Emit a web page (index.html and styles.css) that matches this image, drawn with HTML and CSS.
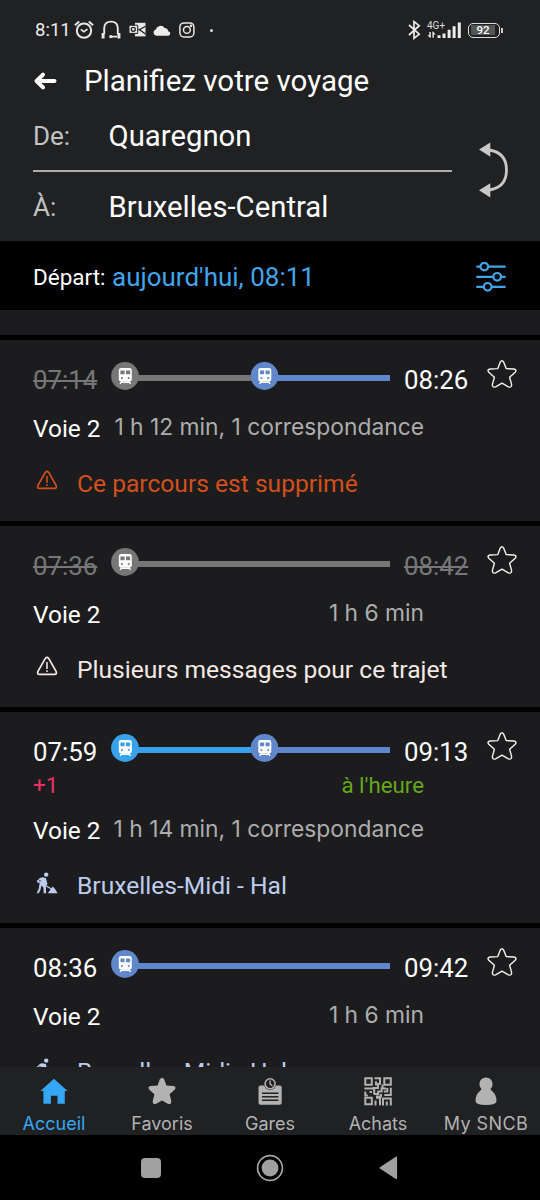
FILE: index.html
```html
<!DOCTYPE html>
<html lang="fr">
<head>
<meta charset="utf-8">
<title>Planifiez votre voyage</title>
<link rel="stylesheet" href="styles.css">
</head>
<body>
<svg class="defs" width="0" height="0">
  <symbol id="pin" viewBox="0 0 28 28">
    <circle cx="14" cy="14" r="13.9" fill="currentColor"/>
    <rect x="7.8" y="6" width="13" height="13.6" rx="2.4" fill="#fff"/>
    <path d="M9.4 8.6h4.2v3.6H9.4zM15 8.6h4.2v3.6H15z" fill="currentColor"/>
    <circle cx="10.9" cy="16" r="1.1" fill="currentColor"/><circle cx="17.7" cy="16" r="1.1" fill="currentColor"/>
    <path d="M10.6 19l-1.4 3M18 19l1.4 3M10.5 20.2h7.6" stroke="#fff" stroke-width="1.4" fill="none"/>
  </symbol>
  <symbol id="star" viewBox="0 0 30 30">
    <path d="M13.2 2.2Q15 -.8 16.7 2.2L19.2 8.6L26.6 9Q30.4 9.6 28.2 12.3L22.6 17.3L24.6 24.4Q24.8 28 21.4 26.8L15 23.1L8.6 26.8Q5.2 28 5.4 24.4L7.4 17.3L1.8 12.3Q-.4 9.6 3.4 9L10.8 8.6Z" fill="none" stroke="#f2f2f2" stroke-width="1.4" stroke-linejoin="round"/>
  </symbol>
  <symbol id="warn" viewBox="0 0 22 20">
    <path d="M9.3 2.4Q11 .2 12.7 2.4L20.2 15.7Q21 18.3 18.5 18.4H3.5Q1 18.3 1.8 15.7Z" fill="none" stroke="currentColor" stroke-width="1.7" stroke-linejoin="round"/>
    <path d="M11 6v7M11 14.3v1.8" stroke="currentColor" stroke-width="1.5"/>
  </symbol>
  <symbol id="works" viewBox="0 0 22 22">
    <circle cx="10.2" cy="2.6" r="2.2" fill="currentColor"/>
    <path d="M1.2 10.6Q2.2 5.6 6.5 5.2L9.8 6.1L11.6 12.2L9.9 13.2L10.1 21.3H7.7L7.4 15.5L5.4 13.6L4.6 17.4L2.8 21.3H.7L2.8 16.4L3.6 11.2L4.8 8.2L3 8.6L2.6 10.9Z" fill="currentColor"/>
    <path d="M1 8.6L15.5 17" stroke="currentColor" stroke-width="1.3"/>
    <path d="M11.8 21.3L14.7 17.3L16.7 14.6L19 17L21.6 21.3Z" fill="currentColor"/>
  </symbol>
</svg>

<header class="top">
  <div class="status">
    <span class="clock">8:11</span>
    <svg class="s-alarm" width="20" height="20" viewBox="0 0 20 20" fill="none" stroke="#e8e8e8"><circle cx="10" cy="10.6" r="7.2" stroke-width="2"/><path d="M6.8 9.4l3 2.3 3.7-2.6" stroke-width="1.7"/><path d="M.9 5.3L5.2 1.4M19.1 5.3L14.8 1.4" stroke-width="2"/></svg>
    <svg class="s-head" width="20" height="20" viewBox="0 0 20 20" fill="none" stroke="#e8e8e8" stroke-width="1.9"><path d="M3.2 14V8.5Q3.2 1.6 10 1.6T16.8 8.5V14M10 16.6h6"/><path d="M.6 13h3v5.6h-3zM16.4 13h3v5.6h-3z" fill="#e8e8e8" stroke="none"/><circle cx="9.8" cy="16.6" r="1.7" fill="#e8e8e8" stroke="none"/></svg>
    <svg class="s-mail" width="17" height="16" viewBox="0 0 17 16"><path d="M6 .8h10.5v13.6H6z" fill="#e8e8e8"/><path d="M9.5 7l7 5M9.5 8.3l7-4" stroke="#202123" stroke-width="1.3"/><path d="M0 3.2h8.7v8.2H0z" fill="#e8e8e8" stroke="#202123"/><circle cx="4.3" cy="7.3" r="2" fill="none" stroke="#202123" stroke-width="1.3"/></svg>
    <svg class="s-cloud" width="18" height="11" viewBox="0 0 18 11"><path d="M3.3 10.7A3.2 3.2 0 0 1 2.7 4.5A5 5 0 0 1 11.6 3A4 4 0 0 1 15.3 6.2A2.3 2.3 0 0 1 15.5 10.7Z" fill="#ececec"/></svg>
    <svg class="s-insta" width="16" height="16" viewBox="0 0 16 16" fill="none" stroke="#e8e8e8" stroke-width="1.5"><rect x=".9" y=".9" width="14" height="14" rx="4"/><circle cx="7.9" cy="7.9" r="3.4"/><circle cx="12" cy="3.8" r=".6"/></svg>
    <span class="dot"></span>
    <svg class="s-bt" width="13" height="20" viewBox="0 0 13 20" fill="none" stroke="#ececec" stroke-width="1.7"><path d="M1 5l10.2 9.2L6 18.3V1.6l5.2 4.1L1 15"/></svg>
    <div class="signal"><span>4G+</span>
      <svg width="35" height="18" viewBox="0 0 35 18" fill="#ececec"><path d="M10.5 14.3h3V17h-3zM15.5 12.5h3V17h-3zM20.6 8.8h3V17h-3zM25.6 5.2h3V17h-3zM30.8 1.5h3V17h-3z"/><path d="M2.3 11v3.2H.4L3 16.8h.8V11zM5.4 10.4v6.4h1.4v-3.2h1.8L6.1 10.4z"/></svg>
    </div>
    <div class="battery"><span>92</span></div>
  </div>
  <div class="titlebar">
    <svg width="23" height="18" viewBox="0 0 23 18" fill="none" stroke="#fff" stroke-width="4" stroke-linecap="round" stroke-linejoin="round"><path d="M3 9h17.5M9 2.6L2.6 9L9 15.4"/></svg>
    <h1>Planifiez votre voyage</h1>
  </div>
  <div class="route">
    <div class="fields">
      <div class="field from"><label>De:</label><span>Quaregnon</span></div>
      <div class="field to"><label>À:</label><span>Bruxelles-Central</span></div>
    </div>
    <svg class="swap" width="30" height="56" viewBox="0 0 30 56"><path d="M10 8Q27.5 10.5 27.5 28T10 48" fill="none" stroke="#c8c8c9" stroke-width="2.8"/><path d="M0 7.6L11.3.5v14.3zM0 48.3L11.3 41.2v14.3z" fill="#c8c8c9"/></svg>
  </div>
</header>

<section class="when">
  <span class="when-label">Départ:</span><span class="when-value">aujourd'hui, 08:11</span>
  <svg width="30" height="30" viewBox="0 0 30 30" fill="none" stroke="#40a5e9" stroke-width="2.2"><path d="M.3 4.6h4.2M12.2 4.6h17.4M.3 14.8h17M25.1 14.8h4.5M.3 24.8h7.5M15.6 24.8h14"/><circle cx="8.3" cy="4.6" r="3.8"/><circle cx="21.2" cy="14.8" r="3.8"/><circle cx="11.7" cy="24.8" r="3.8"/></svg>
</section>

<main class="results">
  <div class="strip"></div>
  <article class="card">
    <div class="times">
      <time class="cut">07:14</time>
      <svg class="track" width="279" height="28" viewBox="0 0 279 28"><path d="M14 16h140" stroke="#777" stroke-width="5.8"/><path d="M153 16h126" stroke="#6087cb" stroke-width="5.8"/><use href="#pin" class="grey" width="28" height="28"/><use href="#pin" class="blue" x="139.5" width="28" height="28"/></svg>
      <time>08:26</time>
      <svg class="fav" width="30" height="30"><use href="#star"/></svg>
    </div>
    <div class="info"><span>Voie 2</span><span class="dur">1 h 12 min, 1 correspondance</span></div>
    <div class="alert cancelled"><svg width="22" height="20"><use href="#warn"/></svg><span>Ce parcours est supprimé</span></div>
  </article>

  <article class="card">
    <div class="times">
      <time class="cut">07:36</time>
      <svg class="track" width="279" height="28" viewBox="0 0 279 28"><path d="M14 16h265" stroke="#777" stroke-width="5.8"/><use href="#pin" class="grey" width="28" height="28"/></svg>
      <time class="cut">08:42</time>
      <svg class="fav" width="30" height="30"><use href="#star"/></svg>
    </div>
    <div class="info"><span>Voie 2</span><span class="dur">1 h 6 min</span></div>
    <div class="alert notice"><svg width="22" height="20"><use href="#warn"/></svg><span>Plusieurs messages pour ce trajet</span></div>
  </article>

  <article class="card">
    <div class="times">
      <time>07:59</time>
      <svg class="track" width="279" height="28" viewBox="0 0 279 28"><path d="M14 16h140" stroke="#38a3ec" stroke-width="5.8"/><path d="M153 16h126" stroke="#6087cb" stroke-width="5.8"/><use href="#pin" class="sky" width="28" height="28"/><use href="#pin" class="blue" x="139.5" width="28" height="28"/></svg>
      <time>09:13</time>
      <svg class="fav" width="30" height="30"><use href="#star"/></svg>
    </div>
    <div class="delay"><span class="late">+1</span><span class="ontime">à l'heure</span></div>
    <div class="info"><span>Voie 2</span><span class="dur">1 h 14 min, 1 correspondance</span></div>
    <div class="alert works"><svg width="22" height="22"><use href="#works"/></svg><span>Bruxelles-Midi - Hal</span></div>
  </article>

  <article class="card">
    <div class="times">
      <time>08:36</time>
      <svg class="track" width="279" height="28" viewBox="0 0 279 28"><path d="M14 16h265" stroke="#6087cb" stroke-width="5.8"/><use href="#pin" class="blue" width="28" height="28"/></svg>
      <time>09:42</time>
      <svg class="fav" width="30" height="30"><use href="#star"/></svg>
    </div>
    <div class="info"><span>Voie 2</span><span class="dur">1 h 6 min</span></div>
    <div class="alert works"><svg width="22" height="22"><use href="#works"/></svg><span>Bruxelles-Midi - Hal</span></div>
  </article>
</main>

<nav class="tabs">
  <a class="tab active"><svg width="30" height="30" viewBox="0 0 30 30" fill="currentColor"><path d="M15 1.8L28.6 14h-2.8v12.7h-7.3v-8h-6.6v8H4.4V14H1.4z"/></svg><span>Accueil</span></a>
  <a class="tab"><svg width="30" height="30" viewBox="0 0 30 30" fill="currentColor"><path d="M12.8 2.3Q15 -1 17.2 2.3L19.4 8.6L26.6 9Q30 10 27.6 12.8L22.6 17.2L24.3 24Q24.4 28 20.8 26.7L15 23.5L9.2 26.7Q5.6 28 5.7 24L7.4 17.2L2.4 12.8Q0 10 3.4 9L10.6 8.6Z"/></svg><span>Favoris</span></a>
  <a class="tab"><svg width="30" height="30" viewBox="0 0 30 30"><path d="M5.5 8.5h19.2q2 0 2 2v15.3q0 2-2 2H5.5q-2 0-2-2V10.5q0-2 2-2z" fill="currentColor"/><path d="M7 16.3h16.4M7 19.8h16.4M7 23.3h16.4" stroke="#202123" stroke-width="1.5"/><circle cx="15.1" cy="6.8" r="6.2" fill="#202123"/><circle cx="15.1" cy="6.8" r="5" fill="none" stroke="currentColor" stroke-width="1.6"/><path d="M15.1 3.5v3.6l2.4 1.7" fill="none" stroke="currentColor" stroke-width="1.4"/></svg><span>Gares</span></a>
  <a class="tab"><svg width="30" height="30" viewBox="0 0 30 30" fill="none" stroke="currentColor" stroke-width="2"><path d="M2.3 1.3h6.5v6.5H2.3zM21.3 1.3h6.5v6.5h-6.5zM2.3 20.7h6.5v6.5H2.3z"/><path d="M11.5 1.3h5.5v6.5M13 4.2v4.3M1.3 11.6h9.2v-.5h4.5V6M2.3 14.5v4h2.5M6.5 15h2.5M11.2 11.5v6M11.2 17h4v-2.5h3.4v-3h4.500M27.8 10.8v7.2h-6.500M19.5 7.5v4M24.3 11v3.5h-3.500M13 19.5h5v-2.500M12.5 23.500v5M13 20.700h4v7.500M20 28.500v-7h7.800v7M23.800 28.500v-4"/></svg><span>Achats</span></a>
  <a class="tab"><svg width="30" height="30" viewBox="0 0 30 30" fill="currentColor"><circle cx="15" cy="7" r="6.6"/><path d="M11 10.5h8q-.3 1.7 2.5 4Q25.5 17.5 25.5 24Q25.5 28 15 28T4.5 24Q4.5 17.5 8.5 14.5Q11.3 12.2 11 10.5z"/></svg><span class="wide">My SNCB</span></a>
</nav>
<footer class="sysnav">
  <span class="recent"></span>
  <svg width="28" height="28" viewBox="0 0 28 28"><circle cx="14" cy="14" r="12.4" fill="none" stroke="#a6a6a6" stroke-width="1.7"/><circle cx="14" cy="14" r="8.4" fill="#a0a0a0"/></svg>
  <svg class="back" width="19" height="24" viewBox="0 0 19 24"><path d="M17.3 1.3v21L1.3 11.9z" fill="#a0a0a0" stroke="#a0a0a0" stroke-width="1.6" stroke-linejoin="round"/></svg>
</footer>
</body>
</html>
```
FILE: styles.css
```css
* { box-sizing: border-box; }
body {
  margin: 0;
  width: 540px;
  height: 1200px;
  overflow: hidden;
  background: #000;
  color: #fff;
  font-family: Roboto, "Liberation Sans", sans-serif;
  display: flex;
  flex-direction: column;
}
svg { display: block; flex: none; }
.defs { position: absolute; }

.top { height: 241px; background: #202123; flex: none; }
.status { height: 60px; display: flex; align-items: center; padding-left: 35px; }
.clock { width: 39px; font-size: 18.5px; line-height: 20px; color: #ececec; }
.s-head { margin-left: 7px; }
.s-mail { margin-left: 8px; }
.s-cloud { margin-left: 7px; }
.s-insta { margin-left: 8px; }
.dot { width: 3px; height: 3px; border-radius: 50%; background: #ddd; margin-left: 15px; }
.s-bt { margin-left: 195px; }
.signal { display: grid; width: 35px; height: 18px; margin-left: 6px; }
.signal > * { grid-area: 1 / 1; }
.signal span { font-size: 10px; line-height: 9px; color: #ddd; }
.battery {
  margin-left: 6px;
  width: 32px;
  height: 15px;
  border: 1.5px solid #ddd;
  border-radius: 5px;
  padding: 1.5px 4px 1.5px 2px;
  font-size: 11.5px;
  font-weight: 500;
  line-height: 10px;
  text-align: center;
  position: relative;
}
.battery span { display: block; background: #555; }
.battery::after {
  content: "";
  position: absolute;
  right: -4px;
  top: 4px;
  width: 2px;
  height: 5px;
  background: #ccc;
}

.titlebar { height: 50px; display: flex; padding: 4px 0 0 34px; }
.titlebar svg { margin-top: 8px; }
h1 { margin: 0 0 0 27px; font-size: 29.5px; font-weight: 400; line-height: 34px; white-space: nowrap; }

.route { display: flex; padding-left: 33px; }
.fields { width: 419px; }
.field { display: flex; font-size: 29.3px; line-height: 34px; }
.field label { width: 75.5px; font-size: 26px; color: #c2c2c3; line-height: 34px; }
.from { height: 62px; padding-top: 9px; border-bottom: 2px solid #adadae; }
.to { padding-top: 18px; }
.swap { margin: 32px 0 0 27px; }

.when { height: 69px; flex: none; display: flex; align-items: center; padding-left: 33px; }
.when-label { width: 79px; font-size: 22.5px; line-height: 30px; padding-top: 2px; }
.when-value { flex: 1; font-size: 26px; line-height: 30px; color: #40a5e9; padding-top: 3px; }
.when svg { margin-right: 34px; margin-top: 2px; }

.results {
  height: 757px;
  flex: none;
  overflow: hidden;
  display: flex;
  flex-direction: column;
  gap: 5px;
}
.strip { height: 25px; flex: none; background: #1c1c1e; }
.card { flex: none; background: #1c1c1e; padding: 0 0 22px 33px; }
.times { display: flex; height: 74px; }
.times time { width: 78px; padding-top: 25px; font-size: 25.8px; line-height: 30px; }
.times .cut { color: #77777a; text-decoration: line-through; text-decoration-thickness: 1.5px; }
.track { margin: 22px 14px 0 0; }
.times .track + time { width: 83px; }
.fav { margin-top: 20px; }
.grey { color: #777; }
.blue { color: #6087cb; }
.sky { color: #38a3ec; }

.delay {
  display: flex;
  justify-content: space-between;
  width: 391px;
  height: 30px;
  margin-top: -14px;
  margin-bottom: 14px;
  font-size: 22.3px;
  line-height: 26px;
}
.late { color: #ea3268; }
.ontime { color: #65a819; }
.info {
  display: flex;
  justify-content: space-between;
  width: 391px;
  height: 55px;
  font-size: 24.4px;
  line-height: 30px;
  white-space: nowrap;
}
.dur { font-family: Inter, sans-serif; font-size: 22.8px; line-height: 25px; color: #adadae; }
.alert { display: flex; height: 30px; font-size: 24.6px; line-height: 30px; }
.alert svg { margin: 1px 19px 0 3px; }
.cancelled { color: #d3501a; }
.notice { color: #f6e9e4; }
.works { color: #bdcdf0; }

.tabs { height: 68px; flex: none; display: flex; background: #202123; }
.tab { width: 108px; display: flex; flex-direction: column; align-items: center; padding-top: 10px; color: #b2b2b3; }
.tab span { font-family: Inter, sans-serif; font-size: 18px; line-height: 22px; margin-top: 6px; }
.tab .wide { letter-spacing: .4px; }
.active { color: #34a6f4; }

.sysnav { height: 65px; flex: none; display: flex; align-items: center; padding-left: 141px; }
.recent { width: 20px; height: 20px; border-radius: 4px; background: #a0a0a0; }
.sysnav svg { margin-left: 95px; }
.sysnav .back { margin-left: 95px; }
```
